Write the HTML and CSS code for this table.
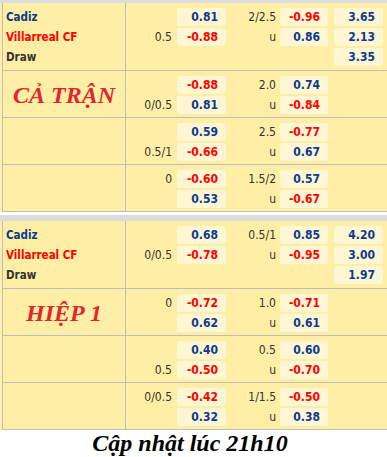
FILE: index.html
```html
<!DOCTYPE html>
<html lang="vi">
<head>
    <meta charset="UTF-8">
    <meta name="viewport" content="width=device-width, initial-scale=1.0">
    <title>Cadiz vs Villarreal CF - Tỷ lệ</title>
    <link rel="stylesheet" href="styles.css">
</head>
<body>
    <div class="odds">
        <div class="bar"></div>
        <div class="board">
            <div class="row head">
                <div class="side teams">
                    <span class="home">Cadiz</span>
                    <span class="away">Villarreal CF</span>
                    <span class="draw">Draw</span>
                </div>
                <div class="lines">
                    <span class="hdp"></span><span class="box blue">0.81</span><span class="hdp">2/2.5</span><span class="box red">-0.96</span><span class="box blue x12">3.65</span>
                    <span class="hdp">0.5</span><span class="box red">-0.88</span><span class="hdp">u</span><span class="box blue">0.86</span><span class="box blue x12">2.13</span>
                    <span class="hdp"></span><span></span><span></span><span></span><span class="box blue x12">3.35</span>
                </div>
            </div>
            <div class="row">
                <div class="side title">CẢ TRẬN</div>
                <div class="lines">
                    <span class="hdp"></span><span class="box red">-0.88</span><span class="hdp">2.0</span><span class="box blue">0.74</span><span></span>
                    <span class="hdp">0/0.5</span><span class="box blue">0.81</span><span class="hdp">u</span><span class="box red">-0.84</span><span></span>
                </div>
            </div>
            <div class="row">
                <div class="side"></div>
                <div class="lines">
                    <span class="hdp"></span><span class="box blue">0.59</span><span class="hdp">2.5</span><span class="box red">-0.77</span><span></span>
                    <span class="hdp">0.5/1</span><span class="box red">-0.66</span><span class="hdp">u</span><span class="box blue">0.67</span><span></span>
                </div>
            </div>
            <div class="row">
                <div class="side"></div>
                <div class="lines">
                    <span class="hdp">0</span><span class="box red">-0.60</span><span class="hdp">1.5/2</span><span class="box blue">0.57</span><span></span>
                    <span class="hdp"></span><span class="box blue">0.53</span><span class="hdp">u</span><span class="box red">-0.67</span><span></span>
                </div>
            </div>
        </div>
    </div>

    <div class="odds">
        <div class="bar"></div>
        <div class="board">
            <div class="row head">
                <div class="side teams">
                    <span class="home">Cadiz</span>
                    <span class="away">Villarreal CF</span>
                    <span class="draw">Draw</span>
                </div>
                <div class="lines">
                    <span class="hdp"></span><span class="box blue">0.68</span><span class="hdp">0.5/1</span><span class="box blue">0.85</span><span class="box blue x12">4.20</span>
                    <span class="hdp">0/0.5</span><span class="box red">-0.78</span><span class="hdp">u</span><span class="box red">-0.95</span><span class="box blue x12">3.00</span>
                    <span class="hdp"></span><span></span><span></span><span></span><span class="box blue x12">1.97</span>
                </div>
            </div>
            <div class="row">
                <div class="side title">HIỆP 1</div>
                <div class="lines">
                    <span class="hdp">0</span><span class="box red">-0.72</span><span class="hdp">1.0</span><span class="box red">-0.71</span><span></span>
                    <span class="hdp"></span><span class="box blue">0.62</span><span class="hdp">u</span><span class="box blue">0.61</span><span></span>
                </div>
            </div>
            <div class="row">
                <div class="side"></div>
                <div class="lines">
                    <span class="hdp"></span><span class="box blue">0.40</span><span class="hdp">0.5</span><span class="box blue">0.60</span><span></span>
                    <span class="hdp">0.5</span><span class="box red">-0.50</span><span class="hdp">u</span><span class="box red">-0.70</span><span></span>
                </div>
            </div>
            <div class="row">
                <div class="side"></div>
                <div class="lines">
                    <span class="hdp">0/0.5</span><span class="box red">-0.42</span><span class="hdp">1/1.5</span><span class="box red">-0.50</span><span></span>
                    <span class="hdp"></span><span class="box blue">0.32</span><span class="hdp">u</span><span class="box blue">0.38</span><span></span>
                </div>
            </div>
        </div>
    </div>

    <p class="updated">Cập nhật lúc 21h10</p>
</body>
</html>
```

FILE: styles.css
```css
body {
    margin: 0;
    padding: 0;
    background-color: #fff;
    font-family: "DejaVu Sans Condensed", "DejaVu Sans", sans-serif;
}

.odds {
    width: 387px;
}

.odds + .odds {
    margin-top: 3px;
}

.bar {
    height: 6px;
    background-color: #dcdcdc;
}

.odds:first-child .bar {
    height: 3px;
}

.board {
    background-color: #ffefa6;
    padding-left: 2px;
}

.row {
    display: flex;
    border-left: 1px solid #bdbdbd;
    border-bottom: 1px solid #bdbdbd;
    background-color: #ffefa6;
}

.side {
    width: 122px;
    border-right: 1px solid #bdbdbd;
}

.teams {
    display: flex;
    flex-direction: column;
    gap: 2px;
    padding: 5px 0 4px 3px;
    width: 119px;
    font-size: 11.5px;
    font-weight: bold;
}

.teams span {
    height: 18px;
    line-height: 18px;
}

.home {
    color: #0c3a8e;
}

.away {
    color: #ff0000;
}

.draw {
    color: #333;
}

.title {
    display: flex;
    align-items: center;
    justify-content: center;
    font-family: "Liberation Serif", "Times New Roman", serif;
    font-style: italic;
    font-weight: bold;
    font-size: 24px;
    color: #e3262d;
    padding-top: 2px;
}

.lines {
    display: grid;
    grid-template-columns: 51px 49px 54px 48px 55px;
    grid-auto-rows: 18px;
    row-gap: 2px;
    padding: 5px 0 3px;
    font-size: 12px;
    line-height: 18px;
}

.head .lines {
    padding-bottom: 4px;
}

.hdp {
    text-align: right;
    padding-right: 5px;
    color: #333;
}

.hdp:nth-child(5n+3) {
    padding-right: 4px;
}

.box {
    background-color: #fff6d4;
    border-radius: 3px;
    text-align: right;
    padding-right: 8px;
    font-weight: bold;
}

.x12 {
    margin-left: 6px;
}

.blue {
    color: #0c3a8e;
}

.red {
    color: #ff0000;
}

.updated {
    margin: 0;
    width: 380px;
    text-align: center;
    font-family: "Liberation Serif", "Times New Roman", serif;
    font-style: italic;
    font-weight: bold;
    font-size: 24px;
    line-height: 26px;
    color: #000;
}
```
